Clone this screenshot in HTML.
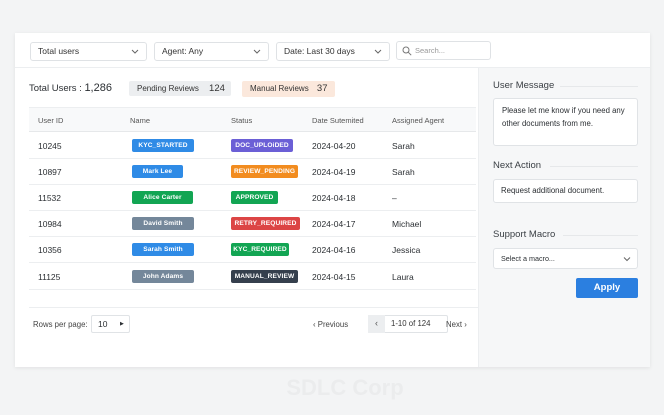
<!DOCTYPE html>
<html><head><meta charset="utf-8"><style>
*{box-sizing:border-box;margin:0;padding:0}
body{width:664px;height:415px;background:#f3f4f5;font-family:"Liberation Sans","DejaVu Sans",sans-serif;color:#2b2f33;position:relative;overflow:hidden}
.a{position:absolute;white-space:nowrap}
.card{left:15px;top:33px;width:635px;height:334px;background:#fff;box-shadow:0 1px 4px rgba(0,0,0,.08)}
.sel{background:#fff;border:1px solid #dfe2e5;border-radius:3px;font-size:8.5px;color:#333;padding-left:7px;line-height:17px}
.chev{position:absolute;right:7px;top:3px}
.badge{position:absolute;height:13px;line-height:13px;font-size:6.6px;font-weight:bold;color:#fff;text-align:center;border-radius:2px;white-space:nowrap;overflow:hidden;letter-spacing:.1px}
.t{position:absolute;font-size:8.5px;color:#2b2f33}
.h{position:absolute;font-size:7.5px;color:#555}
.line{position:absolute;height:1px;background:#eceef0}
.lbl{position:absolute;font-size:9.5px;color:#3a3f44}
.box{position:absolute;background:#fff;border:1px solid #e0e3e6;border-radius:3px;font-size:7.8px;color:#2b2f33}
</style></head><body>
<div class="a card"></div>
<div class="a" style="left:15px;top:67px;width:635px;height:1px;background:#eceef0"></div>
<div class="a" style="left:478px;top:68px;width:172px;height:299px;background:#f6f7f8;border-left:1px solid #eceef0"></div>

<div class="a sel" style="left:30px;top:42px;width:117px;height:19px">Total users<svg class="chev" width="8" height="10" viewBox="0 0 8 10"><path d="M1 4l3 3 3-3" stroke="#666" fill="none" stroke-width="1"/></svg></div>
<div class="a sel" style="left:154px;top:42px;width:115px;height:19px">Agent: Any<svg class="chev" width="8" height="10" viewBox="0 0 8 10"><path d="M1 4l3 3 3-3" stroke="#666" fill="none" stroke-width="1"/></svg></div>
<div class="a sel" style="left:276px;top:42px;width:114px;height:19px">Date: Last 30 days<svg class="chev" width="8" height="10" viewBox="0 0 8 10"><path d="M1 4l3 3 3-3" stroke="#666" fill="none" stroke-width="1"/></svg></div>
<div class="a sel" style="left:396px;top:41px;width:95px;height:19px;color:#999;padding-left:18px;font-size:7.5px">Search...<svg style="position:absolute;left:5px;top:4px" width="10" height="10" viewBox="0 0 10 10"><circle cx="4" cy="4" r="3" stroke="#777" fill="none"/><path d="M6.2 6.2l3 3" stroke="#777"/></svg></div>

<div class="a" style="left:29px;top:82px;font-size:9.5px;color:#2b2f33">Total Users : <span style="font-size:11px">1,286</span></div>
<div class="a" style="left:129px;top:81px;width:102px;height:15px;background:#eceef0;border-radius:2px;font-size:8px;line-height:15px;padding-left:8px;color:#333">Pending Reviews <span style="font-size:9.5px;margin-left:8px">124</span></div>
<div class="a" style="left:242px;top:81px;width:93px;height:16px;background:#fbe8dc;border-radius:2px;font-size:8px;line-height:16px;padding-left:8px;color:#333">Manual Reviews <span style="font-size:9.5px;margin-left:6px">37</span></div>

<div class="a" style="left:29px;top:107px;width:447px;height:25px;background:#f8f9fa;border-top:1px solid #eceef0;border-bottom:1px solid #e6e8ea"></div>
<div class="h" style="left:38px;top:116px">User ID</div>
<div class="h" style="left:130px;top:116px">Name</div>
<div class="h" style="left:231px;top:116px">Status</div>
<div class="h" style="left:312px;top:116px">Date Sutemited</div>
<div class="h" style="left:392px;top:116px">Assigned Agent</div>

<div class="line" style="left:29px;top:158px;width:447px"></div>
<div class="line" style="left:29px;top:184px;width:447px"></div>
<div class="line" style="left:29px;top:210px;width:447px"></div>
<div class="line" style="left:29px;top:236px;width:447px"></div>
<div class="line" style="left:29px;top:262px;width:447px"></div>
<div class="line" style="left:29px;top:289px;width:447px"></div>
<div class="line" style="left:29px;top:307px;width:449px"></div>

<div class="t" style="left:38px;top:141px">10245</div>
<div class="badge" style="left:132px;top:139px;width:62px;background:#2f8be6">KYC_STARTED</div>
<div class="badge" style="left:231px;top:139px;width:62px;background:#6b5fd6">DOC_UPLOiDED</div>
<div class="t" style="left:312px;top:141px">2024-04-20</div>
<div class="t" style="left:392px;top:141px">Sarah</div>

<div class="t" style="left:38px;top:167px">10897</div>
<div class="badge" style="left:132px;top:165px;width:51px;background:#2f8be6">Mark Lee</div>
<div class="badge" style="left:231px;top:165px;width:67px;background:#f28c1f">REVIEW_PENDING</div>
<div class="t" style="left:312px;top:167px">2024-04-19</div>
<div class="t" style="left:392px;top:167px">Sarah</div>

<div class="t" style="left:38px;top:193px">11532</div>
<div class="badge" style="left:132px;top:191px;width:61px;background:#12a553">Alice Carter</div>
<div class="badge" style="left:231px;top:191px;width:47px;background:#12a553">APPROVED</div>
<div class="t" style="left:312px;top:193px">2024-04-18</div>
<div class="t" style="left:392px;top:193px">–</div>

<div class="t" style="left:38px;top:219px">10984</div>
<div class="badge" style="left:132px;top:217px;width:62px;background:#74879a">David Smith</div>
<div class="badge" style="left:231px;top:217px;width:69px;background:#dc4545">RETRY_REQUIRED</div>
<div class="t" style="left:312px;top:219px">2024-04-17</div>
<div class="t" style="left:392px;top:219px">Michael</div>

<div class="t" style="left:38px;top:245px">10356</div>
<div class="badge" style="left:132px;top:243px;width:62px;background:#2f8be6">Sarah Smith</div>
<div class="badge" style="left:231px;top:243px;width:58px;background:#12a553">KYC_REQUIRED</div>
<div class="t" style="left:312px;top:245px">2024-04-16</div>
<div class="t" style="left:392px;top:245px">Jessica</div>

<div class="t" style="left:38px;top:272px">11125</div>
<div class="badge" style="left:132px;top:270px;width:62px;background:#74879a">John Adams</div>
<div class="badge" style="left:231px;top:270px;width:67px;background:#353f4d">MANUAL_REVIEW</div>
<div class="t" style="left:312px;top:272px">2024-04-15</div>
<div class="t" style="left:392px;top:272px">Laura</div>

<div class="a" style="left:33px;top:320px;font-size:7.8px;color:#444">Rows per page:</div>
<div class="a" style="left:91px;top:315px;width:39px;height:18px;border:1px solid #e0e3e6;border-radius:2px;background:#fff;font-size:8.5px;line-height:16px;padding-left:6px">10<span style="position:absolute;left:28px;top:0;font-size:5px">▶</span></div>
<div class="a" style="left:313px;top:320px;font-size:7.8px;color:#444">‹ Previous</div>
<div class="a" style="left:368px;top:315px;width:80px;height:18px;border:1px solid #e0e3e6;border-radius:2px;background:#fff"></div>
<div class="a" style="left:368px;top:315px;width:17px;height:18px;background:#eceef0;font-size:9px;text-align:center;line-height:17px;color:#555">‹</div>
<div class="a" style="left:391px;top:319px;font-size:7.8px;color:#333">1-10 of 124</div>
<div class="a" style="left:446px;top:320px;font-size:7.8px;color:#444">Next ›</div>

<div class="lbl" style="left:493px;top:80px">User Message</div>
<div class="line" style="left:560px;top:86px;width:78px;background:#e6e8ea"></div>
<div class="box" style="left:493px;top:98px;width:145px;height:48px;padding:6px 8px;line-height:12.5px;white-space:normal">Please let me know if you need any other documents from me.</div>
<div class="lbl" style="left:493px;top:160px">Next Action</div>
<div class="line" style="left:550px;top:166px;width:88px;background:#e6e8ea"></div>
<div class="box" style="left:493px;top:179px;width:145px;height:24px;padding-left:7px;line-height:22px">Request additional document.</div>
<div class="lbl" style="left:493px;top:229px">Support Macro</div>
<div class="line" style="left:563px;top:235px;width:75px;background:#e6e8ea"></div>
<div class="box" style="left:493px;top:248px;width:145px;height:21px;padding-left:7px;line-height:20px;font-size:7.2px">Select a macro...<svg style="position:absolute;right:6px;top:6px" width="8" height="8" viewBox="0 0 8 8"><path d="M1 2.5l3 3 3-3" stroke="#666" fill="none"/></svg></div>
<div class="a" style="left:576px;top:278px;width:62px;height:20px;background:#2b7fe0;border-radius:2px;color:#fff;font-size:9.5px;font-weight:bold;text-align:center;line-height:20px">Apply</div>

<div class="a" style="left:0;top:375px;width:690px;text-align:center;font-size:22px;font-weight:bold;color:#ebeced">SDLC Corp</div>
</body></html>
